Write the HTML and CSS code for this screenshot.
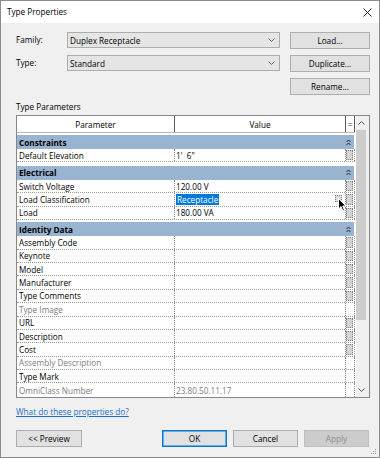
FILE: index.html
```html
<!DOCTYPE html>
<html>
<head>
<meta charset="utf-8">
<link rel="stylesheet" href="styles.css">
</head>
<body>
<div class="window">
  <div class="titlebar">
    <span class="title">Type Properties</span>
    <svg class="close" width="9" height="9" viewBox="0 0 9 9"><path d="M0.5 0.5 L8.5 8.5 M8.5 0.5 L0.5 8.5" stroke="#222" stroke-width="1" fill="none"/></svg>
  </div>
  <div class="content">
    <div class="form-row">
      <span class="lbl">Family:</span>
      <div class="combo"><span>Duplex Receptacle</span><svg width="7" height="4" viewBox="0 0 7 4"><path d="M0.5 0.5 L3.5 3.5 L6.5 0.5" stroke="#666" fill="none"/></svg></div>
      <div class="btn side">Load...</div>
    </div>
    <div class="form-row">
      <span class="lbl">Type:</span>
      <div class="combo"><span>Standard</span><svg width="7" height="4" viewBox="0 0 7 4"><path d="M0.5 0.5 L3.5 3.5 L6.5 0.5" stroke="#666" fill="none"/></svg></div>
      <div class="btn side">Duplicate...</div>
    </div>
    <div class="form-row end">
      <div class="btn side">Rename...</div>
    </div>
    <div class="section-label">Type Parameters</div>
    <div class="table-box">
      <div class="grid">
        <div class="hdr">
          <div class="h-param">Parameter</div>
          <div class="h-value">Value</div>
          <div class="h-eq">=</div>
        </div>

        <div class="group first"><span>Constraints</span><svg class="col" width="5" height="7" viewBox="0 0 5 7"><path d="M0.5 3 L2.5 1 L4.5 3 M0.5 6 L2.5 4 L4.5 6" stroke="#222" fill="none"/></svg></div>
        <div class="row"><div class="p">Default Elevation</div><div class="v">1'&nbsp;&nbsp;6"</div><div class="b"><span class="sq"></span></div></div>

        <div class="group mid"><span>Electrical</span><svg class="col" width="5" height="7" viewBox="0 0 5 7"><path d="M0.5 3 L2.5 1 L4.5 3 M0.5 6 L2.5 4 L4.5 6" stroke="#222" fill="none"/></svg></div>
        <div class="row"><div class="p">Switch Voltage</div><div class="v">120.00 V</div><div class="b"><span class="sq"></span></div></div>
        <div class="row"><div class="p">Load Classification</div><div class="v"><span class="sel">Receptacle</span><span class="dots"></span></div><div class="b"><span class="sq"></span></div></div>
        <div class="row"><div class="p">Load</div><div class="v">180.00 VA</div><div class="b"><span class="sq"></span></div></div>

        <div class="group first"><span>Identity Data</span><svg class="col" width="5" height="7" viewBox="0 0 5 7"><path d="M0.5 3 L2.5 1 L4.5 3 M0.5 6 L2.5 4 L4.5 6" stroke="#222" fill="none"/></svg></div>
        <div class="row"><div class="p">Assembly Code</div><div class="v"></div><div class="b"><span class="sq"></span></div></div>
        <div class="row"><div class="p">Keynote</div><div class="v"></div><div class="b"><span class="sq"></span></div></div>
        <div class="row"><div class="p">Model</div><div class="v"></div><div class="b"><span class="sq"></span></div></div>
        <div class="row"><div class="p">Manufacturer</div><div class="v"></div><div class="b"><span class="sq"></span></div></div>
        <div class="row"><div class="p">Type Comments</div><div class="v"></div><div class="b"><span class="sq"></span></div></div>
        <div class="row"><div class="p gray">Type Image</div><div class="v"></div><div class="b"></div></div>
        <div class="row"><div class="p">URL</div><div class="v"></div><div class="b"><span class="sq"></span></div></div>
        <div class="row"><div class="p">Description</div><div class="v"></div><div class="b"><span class="sq"></span></div></div>
        <div class="row"><div class="p">Cost</div><div class="v"></div><div class="b"><span class="sq"></span></div></div>
        <div class="row"><div class="p gray">Assembly Description</div><div class="v"></div><div class="b"></div></div>
        <div class="row"><div class="p">Type Mark</div><div class="v"></div><div class="b"></div></div>
        <div class="row last"><div class="p gray">OmniClass Number</div><div class="v gray">23.80.50.11.17</div><div class="b"></div></div>
      </div>
      <div class="scrollbar">
        <div class="sb-arrow"><svg width="7" height="4" viewBox="0 0 7 4"><path d="M0.5 3.5 L3.5 0.5 L6.5 3.5" stroke="#555" fill="none"/></svg></div>
        <div class="thumb"></div>
        <div class="sb-fill"></div>
        <div class="sb-arrow"><svg width="7" height="4" viewBox="0 0 7 4"><path d="M0.5 0.5 L3.5 3.5 L6.5 0.5" stroke="#555" fill="none"/></svg></div>
      </div>
    </div>
    <a class="help">What do these properties do?</a>
    <div class="footer">
      <div class="btn preview">&lt;&lt; Preview</div>
      <div class="btn foot ok">OK</div>
      <div class="btn foot">Cancel</div>
      <div class="btn foot disabled">Apply</div>
    </div>
  </div>
  <svg class="cursor" width="9" height="14" viewBox="0 0 9 14"><path d="M0.5 0.5 L0.5 11 L3 8.6 L4.8 12.6 L6.4 11.9 L4.7 8 L8 8 Z" fill="#000" stroke="#fff" stroke-width="1"/></svg>
  <svg class="grip" width="6" height="6" viewBox="0 0 6 6"><rect x="4" y="0" width="1" height="1" fill="#999"/><rect x="2" y="2" width="1" height="1" fill="#999"/><rect x="4" y="2" width="1" height="1" fill="#999"/><rect x="0" y="4" width="1" height="1" fill="#999"/><rect x="2" y="4" width="1" height="1" fill="#999"/><rect x="4" y="4" width="1" height="1" fill="#999"/></svg>
</div>
</body>
</html>
```
FILE: styles.css
```css
* { box-sizing: border-box; }
html, body { margin: 0; padding: 0; }
body {
  width: 380px;
  height: 458px;
  overflow: hidden;
  font-family: "Open Sans", "Noto Sans", sans-serif;
  font-size: 8.2px;
  color: #000;
  background: #fff;
}
.window {
  position: relative;
  width: 380px;
  height: 458px;
  border: 1px solid #8a8a8a;
  background: #f0f0f0;
  display: flex;
  flex-direction: column;
}
.titlebar {
  height: 22px;
  background: #fff;
  display: flex;
  align-items: center;
  justify-content: space-between;
  padding: 0 7px 0 6px;
}
.title { line-height: 12px; }
.close { display: block; }
.content {
  padding: 9px 9px 0 15px;
  display: flex;
  flex-direction: column;
}
.form-row {
  display: flex;
  align-items: flex-start;
  height: 17px;
  margin-bottom: 6px;
}
.form-row.end { justify-content: flex-end; }
.lbl {
  width: 51px;
  line-height: 16px;
}
.combo {
  width: 213px;
  height: 16px;
  background: #e5e5e5;
  border: 1px solid #adadad;
  display: flex;
  align-items: center;
  justify-content: space-between;
  padding: 0 4px 0 2px;
}
.combo svg { display: block; }
.btn {
  height: 17px;
  background: #e1e1e1;
  border: 1px solid #adadad;
  display: flex;
  align-items: center;
  justify-content: center;
  line-height: 12px;
}
.btn.side { width: 80px; margin-left: 10px; }
.section-label {
  line-height: 12px;
  height: 12px;
  margin-bottom: 2px;
}
.table-box {
  width: 354px;
  height: 283px;
  border: 1px solid #828790;
  background: #fff;
  display: flex;
}
.grid {
  width: 338px;
  display: flex;
  flex-direction: column;
}
.hdr {
  height: 17px;
  display: flex;
  border-bottom: 1px solid #b4b4b4;
}
.h-param {
  width: 158px;
  border-right: 1px solid #5a5a5a;
  display: flex;
  align-items: center;
  justify-content: center;
}
.h-value {
  width: 170px;
  display: flex;
  align-items: center;
  justify-content: center;
}
.h-eq {
  width: 10px;
  border-left: 1px solid #5a5a5a;
  border-right: 1px solid #5a5a5a;
  display: flex;
  align-items: center;
  justify-content: center;
  color: #333;
}
.group {
  height: 14px;
  background: #99b4d1;
  font-weight: bold;
  display: flex;
  align-items: center;
  justify-content: space-between;
  padding: 0 3px 0 2px;
  margin-right: 1px;
}
.group.first { margin-top: 2px; }
.group.mid { margin-top: 3.6px; }
.col { display: block; }
.row {
  height: 13.4px;
  display: flex;
  border-bottom: 1px dotted #9a9a9a;
}
.row.last { border-bottom: none; }
.p {
  width: 158px;
  padding-left: 2px;
  border-right: 1px dotted #8c8c8c;
  display: flex;
  align-items: center;
  white-space: nowrap;
}
.v {
  width: 170px;
  padding-left: 1px;
  display: flex;
  align-items: center;
  white-space: nowrap;
}
.b {
  width: 10px;
  border-left: 1px dotted #8c8c8c;
  border-right: 1px dotted #8c8c8c;
  display: flex;
  align-items: stretch;
  padding: 1px 0;
}
.sq {
  width: 7px;
  background: #d4d4d4;
  border: 1px dotted #7a7a7a;
}
.gray { color: #7d7d7d; }
.sel {
  background: #0078d7;
  color: #fff;
  padding: 0 1px;
  line-height: 11px;
}
.dots {
  width: 7px;
  height: 7px;
  margin-left: auto;
  margin-right: 3px;
  margin-bottom: 2px;
  background: #dcdcdc;
  border: 1px dotted #7a7a7a;
}
.scrollbar {
  width: 14px;
  background: #f0f0f0;
  border-left: 1px solid #fff;
  display: flex;
  flex-direction: column;
}
.sb-arrow {
  height: 14px;
  display: flex;
  align-items: center;
  justify-content: center;
  padding-right: 2px;
}
.sb-arrow svg { display: block; }
.thumb {
  width: 10px;
  height: 190px;
  background: #cdcdcd;
}
.sb-fill { flex: 1; }
.help {
  margin-top: 8px;
  line-height: 12px;
  color: #1a6fc9;
  text-decoration: underline;
  align-self: flex-start;
}
.footer {
  margin-top: 12px;
  display: flex;
  gap: 6px;
  padding-right: 1px;
}
.btn.preview { width: 66px; margin-right: auto; }
.btn.foot { width: 65px; }
.btn.ok { border-color: #0078d7; box-shadow: inset 0 0 0 0.5px #0078d7; }
.btn.disabled { background: #cccccc; border-color: #bfbfbf; color: #8d8d8d; }
.cursor {
  position: absolute;
  left: 337px;
  top: 197px;
}
.grip {
  position: absolute;
  right: 2px;
  bottom: 2px;
}
```
